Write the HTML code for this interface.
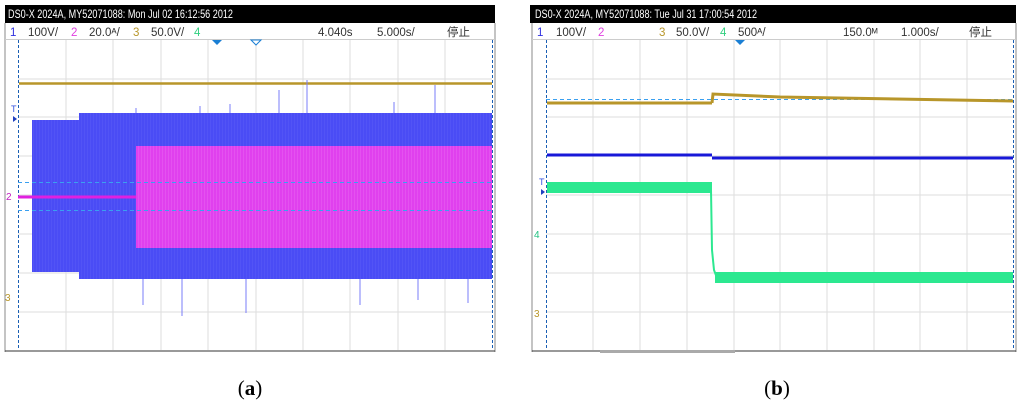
<!DOCTYPE html>
<html><head><meta charset="utf-8"><style>
html,body{margin:0;padding:0;background:#fff;width:1024px;height:412px;overflow:hidden}
svg{display:block}
.h{font-family:"Liberation Sans Narrow","Liberation Sans",sans-serif;font-size:12px;fill:#fff}
.l{font-family:"Liberation Sans","Noto Sans CJK SC",sans-serif;font-size:11.5px}
.cap{font-family:"Liberation Serif",serif;font-size:21px}
</style></head><body>
<svg width="1024" height="412" viewBox="0 0 1024 412" xmlns="http://www.w3.org/2000/svg">
<defs>
<pattern id="nb" width="3" height="10" patternUnits="userSpaceOnUse"><rect width="3" height="10" fill="#4a4cf5"/><rect width="1" height="10" fill="#5254f6"/></pattern>
<pattern id="nm" width="3" height="10" patternUnits="userSpaceOnUse"><rect width="3" height="10" fill="#e040ee"/><rect width="1" height="10" fill="#e452ef"/></pattern>
</defs>
<!-- Panel A -->
<rect x="5" y="5" width="490" height="18" fill="#000"/>
<text class="h" x="8" y="18" textLength="225" lengthAdjust="spacingAndGlyphs">DS0-X 2024A, MY52071088: Mon Jul 02 16:12:56 2012</text>
<line x1="5" y1="23" x2="5" y2="352" stroke="#888"/>
<line x1="495" y1="23" x2="495" y2="352" stroke="#888"/>
<line x1="5" y1="351" x2="495" y2="351" stroke="#333"/>
<text class="l" x="10" y="36" fill="#3030e0">1</text>
<text class="l" x="28" y="36" fill="#333">100V/</text>
<text class="l" x="71" y="36" fill="#e040e0">2</text>
<text class="l" x="89" y="36" fill="#333">20.0ᴬ/</text>
<text class="l" x="133" y="36" fill="#b8962a">3</text>
<text class="l" x="151" y="36" fill="#333">50.0V/</text>
<text class="l" x="194" y="36" fill="#30d080">4</text>
<text class="l" x="318" y="36" fill="#333">4.040s</text>
<text class="l" x="377" y="36" fill="#333">5.000s/</text>
<text class="l" x="447" y="36" fill="#333">停止</text>
<line x1="5" y1="39.5" x2="495" y2="39.5" stroke="#ccc"/>
<g stroke="#ddd" stroke-width="1">
<line x1="66" y1="40" x2="66" y2="350"/><line x1="113" y1="40" x2="113" y2="350"/><line x1="161" y1="40" x2="161" y2="350"/><line x1="208" y1="40" x2="208" y2="350"/><line x1="256" y1="40" x2="256" y2="350"/><line x1="303" y1="40" x2="303" y2="350"/><line x1="350" y1="40" x2="350" y2="350"/><line x1="398" y1="40" x2="398" y2="350"/><line x1="445" y1="40" x2="445" y2="350"/>
<line x1="18" y1="79" x2="492" y2="79"/><line x1="18" y1="117" x2="492" y2="117"/><line x1="18" y1="156" x2="492" y2="156"/><line x1="18" y1="195" x2="492" y2="195"/><line x1="18" y1="234" x2="492" y2="234"/><line x1="18" y1="273" x2="492" y2="273"/><line x1="18" y1="312" x2="492" y2="312"/>
</g>
<line x1="18.5" y1="40" x2="18.5" y2="350" stroke="#1a5fb4" stroke-dasharray="3,2"/>
<line x1="492.5" y1="40" x2="492.5" y2="350" stroke="#1a5fb4" stroke-dasharray="3,2"/>
<line x1="19" y1="83.5" x2="492" y2="83.5" stroke="#b8962a" stroke-width="2.5"/>
<rect x="32" y="120" width="47" height="152" fill="url(#nb)"/>
<rect x="79" y="113" width="413" height="166" fill="url(#nb)"/>
<g stroke="#7a7cf8" stroke-width="1">
<line x1="279" y1="90" x2="279" y2="113"/><line x1="307" y1="80" x2="307" y2="113"/><line x1="435" y1="85" x2="435" y2="113"/><line x1="143" y1="279" x2="143" y2="305"/><line x1="182" y1="279" x2="182" y2="316"/><line x1="246" y1="279" x2="246" y2="313"/><line x1="360" y1="279" x2="360" y2="305"/><line x1="418" y1="279" x2="418" y2="300"/><line x1="468" y1="279" x2="468" y2="303"/><line x1="136" y1="108" x2="136" y2="113"/><line x1="200" y1="106" x2="200" y2="113"/><line x1="230" y1="104" x2="230" y2="113"/><line x1="394" y1="102" x2="394" y2="113"/></g>
<rect x="136" y="146" width="356" height="102" fill="url(#nm)"/>
<line x1="18" y1="182.5" x2="492" y2="182.5" stroke="#3aa0f0" stroke-dasharray="4,3"/>
<line x1="18" y1="210.5" x2="492" y2="210.5" stroke="#3aa0f0" stroke-dasharray="4,3"/>
<line x1="18" y1="197" x2="136" y2="197" stroke="#e020e0" stroke-width="3"/>
<polygon points="212,40 222,40 217,45" fill="#1a7fd4"/>
<polygon points="251,40 261,40 256,45" fill="#fff" stroke="#1a7fd4"/>
<text x="11" y="112" font-size="9" fill="#3050e0" font-family="Liberation Sans">T</text>
<polygon points="13,116 17,119 13,122" fill="#2040c0"/>
<text x="6" y="200" font-size="10" fill="#c020c0" font-family="Liberation Sans">2</text>
<text x="5" y="301" font-size="10" fill="#b8962a" font-family="Liberation Sans">3</text>
<!-- Panel B -->
<rect x="530" y="5" width="486" height="18" fill="#000"/>
<text class="h" x="535" y="18" textLength="222" lengthAdjust="spacingAndGlyphs">DS0-X 2024A, MY52071088: Tue Jul 31 17:00:54 2012</text>
<line x1="532" y1="23" x2="532" y2="352" stroke="#888"/>
<line x1="1016" y1="23" x2="1016" y2="352" stroke="#888"/>
<line x1="532" y1="351" x2="1016" y2="351" stroke="#333"/>
<rect x="600" y="350" width="135" height="3" fill="#aaa"/>
<text class="l" x="537" y="36" fill="#3030e0">1</text>
<text class="l" x="556" y="36" fill="#333">100V/</text>
<text class="l" x="598" y="36" fill="#e040e0">2</text>
<text class="l" x="659" y="36" fill="#b8962a">3</text>
<text class="l" x="676" y="36" fill="#333">50.0V/</text>
<text class="l" x="720" y="36" fill="#30d080">4</text>
<text class="l" x="738" y="36" fill="#333">500ᴬ/</text>
<text class="l" x="843" y="36" fill="#333">150.0ᴹ</text>
<text class="l" x="901" y="36" fill="#333">1.000s/</text>
<text class="l" x="969" y="36" fill="#333">停止</text>
<line x1="532" y1="39.5" x2="1016" y2="39.5" stroke="#ccc"/>
<g stroke="#ddd" stroke-width="1">
<line x1="593" y1="40" x2="593" y2="350"/><line x1="640" y1="40" x2="640" y2="350"/><line x1="687" y1="40" x2="687" y2="350"/><line x1="734" y1="40" x2="734" y2="350"/><line x1="780" y1="40" x2="780" y2="350"/><line x1="827" y1="40" x2="827" y2="350"/><line x1="874" y1="40" x2="874" y2="350"/><line x1="920" y1="40" x2="920" y2="350"/><line x1="967" y1="40" x2="967" y2="350"/>
<line x1="546" y1="79" x2="1013" y2="79"/><line x1="546" y1="117" x2="1013" y2="117"/><line x1="546" y1="156" x2="1013" y2="156"/><line x1="546" y1="195" x2="1013" y2="195"/><line x1="546" y1="234" x2="1013" y2="234"/><line x1="546" y1="273" x2="1013" y2="273"/><line x1="546" y1="312" x2="1013" y2="312"/>
</g>
<line x1="546.5" y1="40" x2="546.5" y2="350" stroke="#1a5fb4" stroke-dasharray="3,2"/>
<line x1="1013.5" y1="40" x2="1013.5" y2="350" stroke="#1a5fb4" stroke-dasharray="3,2"/>
<line x1="546" y1="99.5" x2="1013" y2="99.5" stroke="#3aa0f0" stroke-dasharray="4,3"/>
<line x1="547" y1="103" x2="712" y2="103" stroke="#b8962a" stroke-width="3"/>
<polyline points="712,103 713,94 780,97 1013,101" fill="none" stroke="#b8962a" stroke-width="3"/>
<line x1="547" y1="155" x2="712" y2="155" stroke="#1818d8" stroke-width="3"/>
<line x1="712" y1="158" x2="1013" y2="158" stroke="#1818d8" stroke-width="3"/>
<rect x="547" y="182" width="165" height="11" fill="#2ce890"/>
<polyline points="711,190 712,250 714,270 717,278" fill="none" stroke="#2ce890" stroke-width="2"/>
<rect x="715" y="272" width="298" height="11" fill="#2ce890"/>
<polygon points="735,40 745,40 740,45" fill="#1a7fd4"/>
<text x="539" y="185" font-size="9" fill="#3050e0" font-family="Liberation Sans">T</text>
<polygon points="541,189 545,192 541,195" fill="#2040c0"/>
<text x="534" y="238" font-size="10" fill="#20c080" font-family="Liberation Sans">4</text>
<text x="534" y="317" font-size="10" fill="#b8962a" font-family="Liberation Sans">3</text>
<!-- captions -->
<text class="cap" x="250" y="395" text-anchor="middle">(<tspan font-weight="bold">a</tspan>)</text>
<text class="cap" x="777" y="395" text-anchor="middle">(<tspan font-weight="bold">b</tspan>)</text>
</svg>
</body></html>
